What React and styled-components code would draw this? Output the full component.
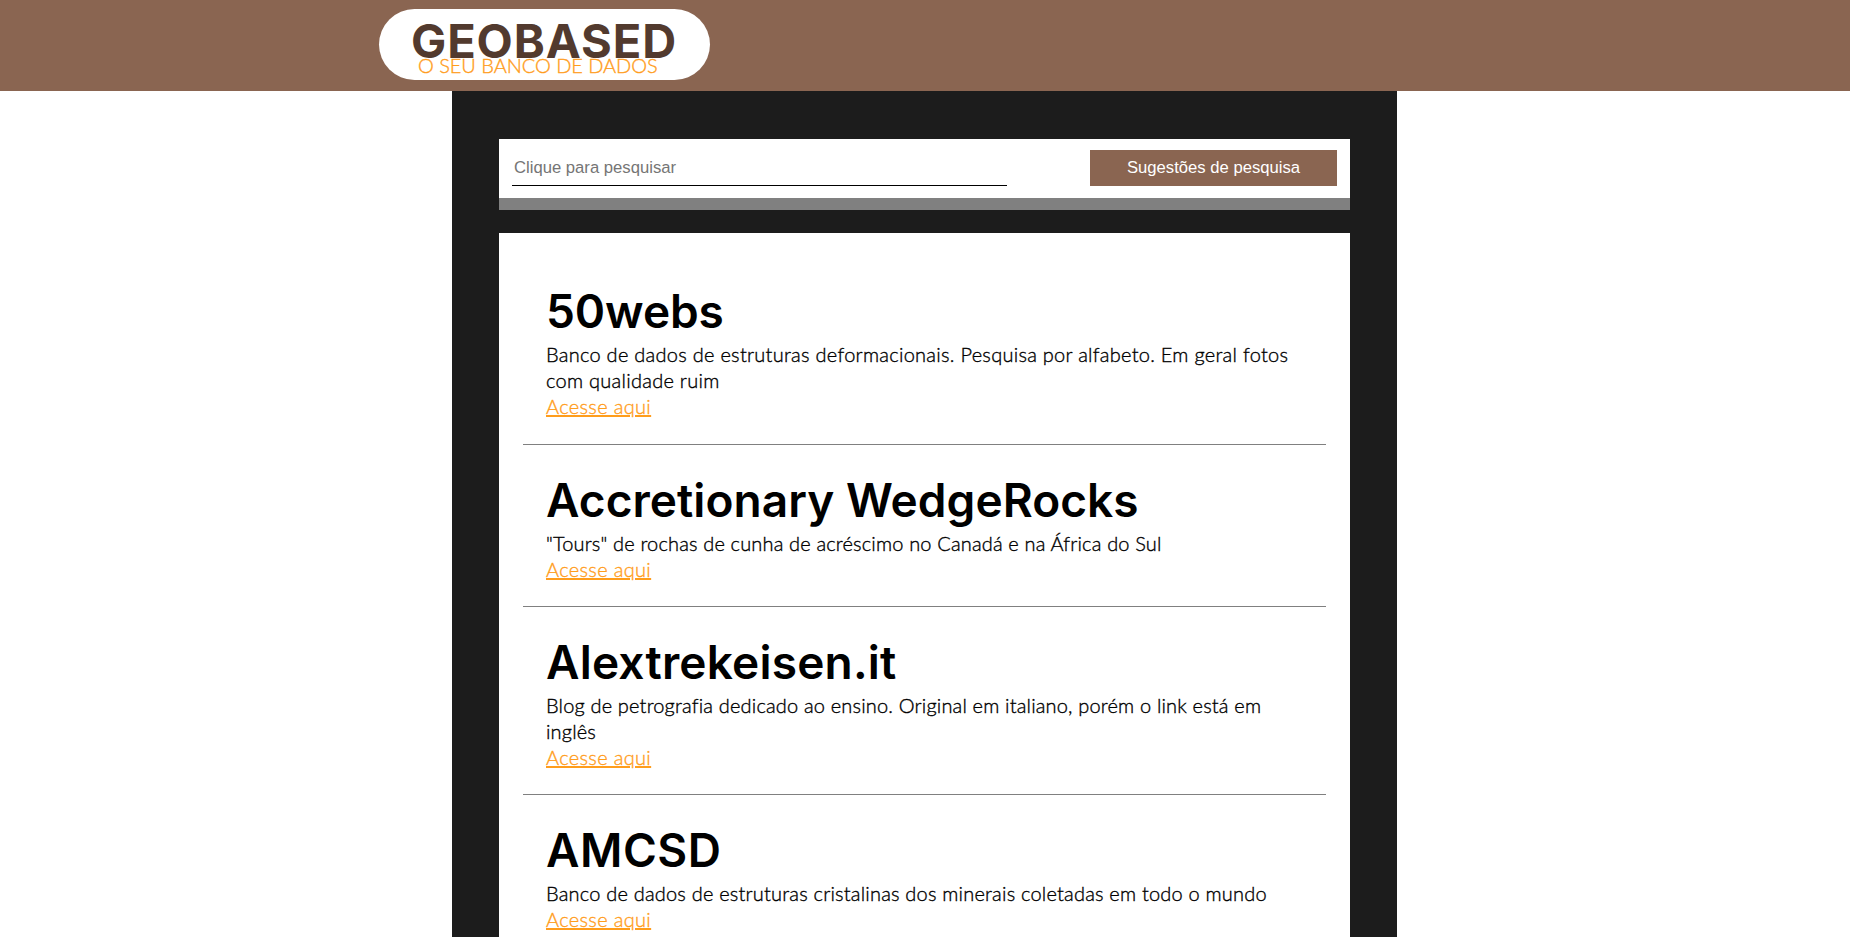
import React from 'react';
import styled, { createGlobalStyle } from 'styled-components';

const GlobalStyle = createGlobalStyle`
  * { box-sizing: border-box; margin: 0; padding: 0; }
  html, body { background: #fff; }
  body { height: 100vh; overflow: hidden; font-family: Lato, sans-serif; }
`;

const Header = styled.header`
  height: 91px;
  padding: 9px 0 0 379px;
  background: #8a6551;
`;

const Logo = styled.div`
  width: 331px;
  height: 71px;
  padding: 8px 0 0 32px;
  border-radius: 36px;
  background: #fff;
`;

const LogoName = styled.h1`
  font: 700 47px/47px Inter, sans-serif;
  letter-spacing: 0.9px;
  color: #523a2e;
`;

const LogoTagline = styled.p`
  padding-left: 7px;
  margin-top: -11px;
  font: 300 20px/24px Lato, sans-serif;
  letter-spacing: -0.05px;
  color: #ff9d1c;
  -webkit-text-stroke: 0.35px currentColor;
`;

const Main = styled.main`
  width: 945px;
  margin-left: 452px;
  padding: 48px 47px 0;
  background: #1c1c1c;
`;

const SearchBar = styled.form`
  display: flex;
  justify-content: space-between;
  height: 71px;
  padding: 11px 13px 0;
  border-bottom: 12px solid #808080;
  background: #fff;
`;

const SearchInput = styled.input`
  width: 495px;
  height: 36px;
  padding: 0 2px;
  border: 0;
  border-bottom: 1px solid #000;
  outline: 0;
  background: transparent;
  font: 16.67px "Liberation Sans", Arial, sans-serif;

  &::placeholder { color: #757575; opacity: 1; }
`;

const SuggestButton = styled.button`
  width: 247px;
  height: 36px;
  border: 0;
  background: #8a6551;
  color: #fff;
  font: 16.67px "Liberation Sans", Arial, sans-serif;
`;

const Results = styled.section`
  height: 704px;
  overflow: hidden;
  margin-top: 23px;
  padding: 24px 24px 0;
  background: #fff;
`;

const Item = styled.article`
  padding: 25px 24px 24px 23px;
  border-bottom: 1px solid #808080;

  &:first-child { padding-top: 24px; padding-bottom: 25px; }
`;

const ItemTitle = styled.h2`
  font: 600 46px/60px Inter, sans-serif;
  letter-spacing: ${(p) => p.$tracking}px;
`;

const ItemText = styled.p`
  font: 300 20px/26px Lato, sans-serif;
  letter-spacing: ${(p) => p.$tracking}px;
  color: #000;
  -webkit-text-stroke: 0.35px currentColor;
`;

const ItemLink = styled.a`
  display: block;
  width: fit-content;
  font: 300 20px/26px Lato, sans-serif;
  letter-spacing: 0.33px;
  color: #ff9d1c;
  -webkit-text-stroke: 0.35px currentColor;
  text-decoration: underline 2px;
  text-underline-offset: 1px;
`;

const items = [
  { title: '50webs', titleTracking: -0.1, tracking: 0.27, text: 'Banco de dados de estruturas deformacionais. Pesquisa por alfabeto. Em geral fotos com qualidade ruim' },
  { title: 'Accretionary WedgeRocks', titleTracking: 0.05, tracking: 0.16, text: '"Tours" de rochas de cunha de acréscimo no Canadá e na África do Sul' },
  { title: 'Alextrekeisen.it', titleTracking: 0.2, tracking: 0.17, text: 'Blog de petrografia dedicado ao ensino. Original em italiano, porém o link está em inglês' },
  { title: 'AMCSD', titleTracking: 0.5, tracking: 0.2, text: 'Banco de dados de estruturas cristalinas dos minerais coletadas em todo o mundo' },
];

export default function App() {
  return (
    <>
      <GlobalStyle />
      <Header>
        <Logo>
          <LogoName>GEOBASED</LogoName>
          <LogoTagline>O SEU BANCO DE DADOS</LogoTagline>
        </Logo>
      </Header>
      <Main>
        <SearchBar>
          <SearchInput placeholder="Clique para pesquisar" />
          <SuggestButton type="button">Sugestões de pesquisa</SuggestButton>
        </SearchBar>
        <Results>
          {items.map((item) => (
            <Item key={item.title}>
              <ItemTitle $tracking={item.titleTracking}>{item.title}</ItemTitle>
              <ItemText $tracking={item.tracking}>{item.text}</ItemText>
              <ItemLink href="#">Acesse aqui</ItemLink>
            </Item>
          ))}
        </Results>
      </Main>
    </>
  );
}
